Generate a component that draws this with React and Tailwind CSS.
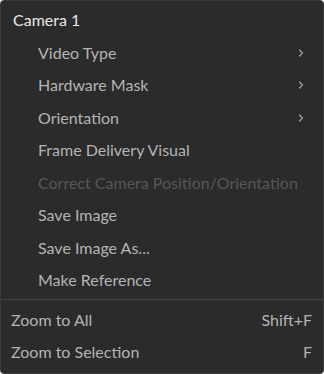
import { ChevronRight } from 'lucide-react';

const items = [
  { label: 'Video Type', sub: true },
  { label: 'Hardware Mask', sub: true },
  { label: 'Orientation', sub: true },
  { label: 'Frame Delivery Visual' },
  { label: 'Correct Camera Position/Orientation', disabled: true },
  { label: 'Save Image' },
  { label: 'Save Image As...' },
  { label: 'Make Reference' },
];

const zoom = [
  { label: 'Zoom to All', key: 'Shift+F' },
  { label: 'Zoom to Selection', key: 'F' },
];

export default function App() {
  return (
    <div className="w-[324px] h-[374px] bg-[#2b2b2b] border border-[#3a3a3a] rounded-[4px] pt-[3px] text-[16px] font-['Lato',sans-serif] select-none">
      <div className="h-[32.5px] flex items-center pl-[12px] text-[#e8e8e8]">Camera 1</div>
      {items.map((it) => (
        <div key={it.label}
          className={`h-[32.5px] flex items-center pl-[37px] pr-[16px] ${it.disabled ? 'text-[#575757]' : 'text-[#b4b4b4]'}`}>
          <span className="flex-1">{it.label}</span>
          {it.sub && <ChevronRight size={12} strokeWidth={2.5} className="text-[#a0a0a0]" />}
        </div>
      ))}
      <div className="h-px bg-[#474747] mt-[2px] mb-[4px]" />
      {zoom.map((z) => (
        <div key={z.label} className="h-[32px] flex items-center pl-[10px] pr-[11px] text-[#b4b4b4]">
          <span className="flex-1">{z.label}</span>
          <span>{z.key}</span>
        </div>
      ))}
    </div>
  );
}
